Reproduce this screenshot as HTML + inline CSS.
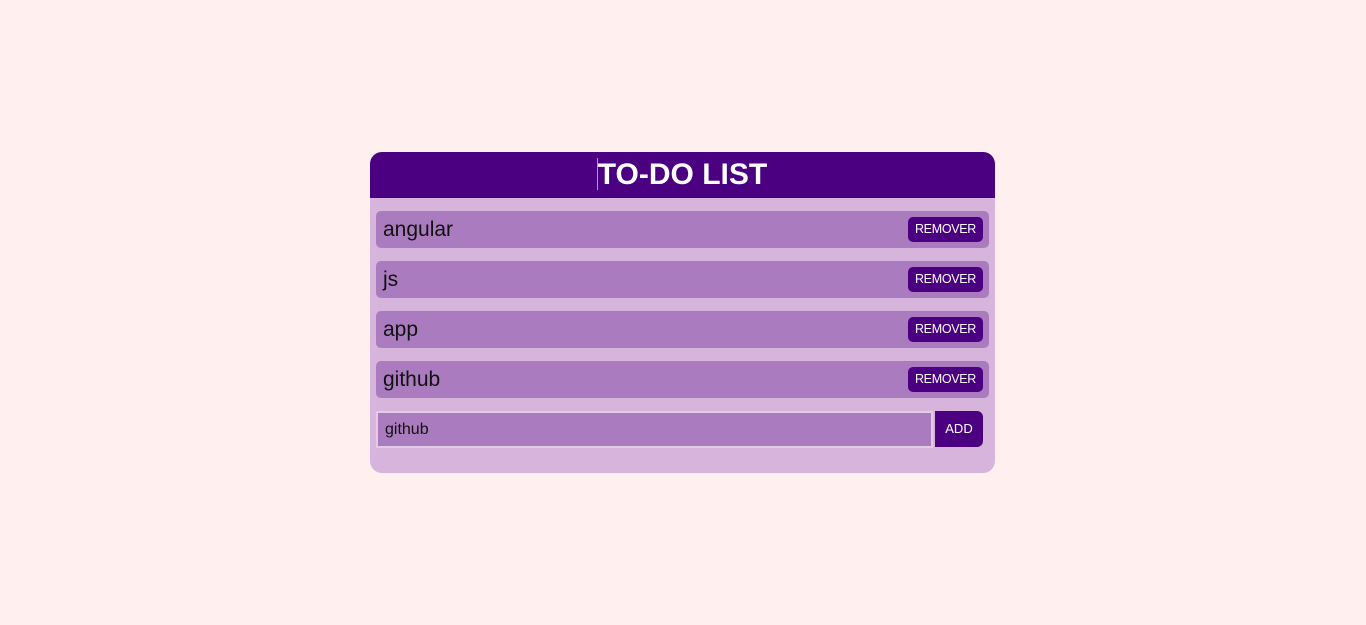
<!DOCTYPE html>
<html><head><style>
body{margin:0;background:#fff0ef;width:1366px;height:625px;position:relative;font-family:"Liberation Sans",sans-serif;}
.box{position:absolute;left:370px;top:152px;width:625px;height:321px;background:#d6b4db;border-radius:12px;overflow:hidden;}
.hd{height:46px;background:#4b0082;color:#fff;font-weight:bold;font-size:30px;text-align:center;line-height:46px;position:relative}
.cur{position:absolute;left:227px;top:6px;width:1px;height:32px;background:#a89cc0}
.it{position:absolute;left:6px;width:613px;height:37px;background:#aa7bbe;border-radius:5px;}
.it span{position:absolute;left:7px;top:7px;font-size:21px;color:#111}
.btn{position:absolute;left:532px;top:6px;width:75px;height:25px;background:#4b0082;color:#fff;border-radius:5px;font-size:12.5px;letter-spacing:-0.3px;text-align:center;line-height:25px}
.inp{position:absolute;left:6px;top:259px;height:33px;background:#aa7bbe;border:2px solid #e2cbe6;font-size:16px;line-height:33px;padding-left:7px;box-sizing:content-box;width:546px;color:#111}
.add{position:absolute;left:565px;top:259px;width:48px;height:36px;background:#4b0082;color:#fff;border-radius:0 6px 6px 0;font-size:13px;text-align:center;line-height:36px}
</style></head><body>
<div class="box">
<div class="hd"><div class="cur"></div>TO-DO LIST</div>
<div class="it" style="top:59px"><span>angular</span><div class="btn">REMOVER</div></div>
<div class="it" style="top:109px"><span>js</span><div class="btn">REMOVER</div></div>
<div class="it" style="top:159px"><span>app</span><div class="btn">REMOVER</div></div>
<div class="it" style="top:209px"><span>github</span><div class="btn">REMOVER</div></div>
<div class="inp">github</div>
<div class="add">ADD</div>
</div>
</body></html>
